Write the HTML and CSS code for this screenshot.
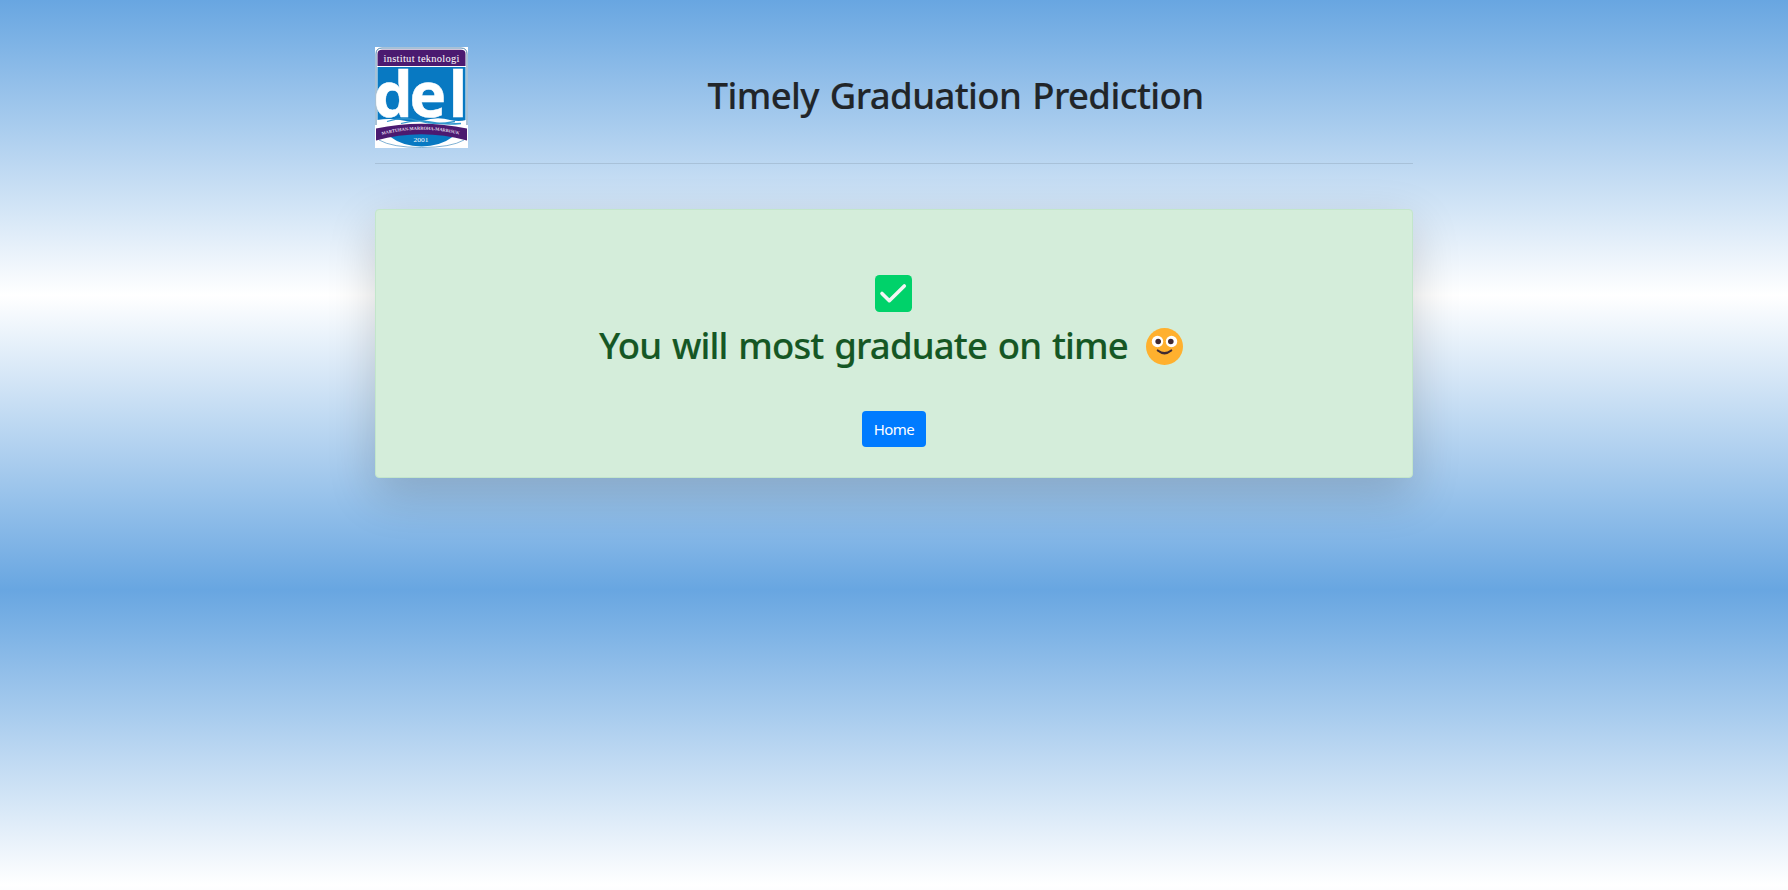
FILE: index.html
```html
<!DOCTYPE html>
<html lang="en">
<head>
<meta charset="utf-8">
<title>Timely Graduation Prediction</title>
<link rel="stylesheet" href="styles.css">
</head>
<body>
<main class="container">
  <header class="header">
    <svg class="logo" viewBox="0 0 93 101" role="img" aria-label="Institut Teknologi Del">
      <rect width="93" height="101" fill="#fff"/>
      <path d="M1 78V7Q1 1 7 1H86Q92 1 92 7V78" fill="#fff" stroke="#3d76a5" stroke-width=".9"/>
      <path d="M2.500 19V7Q2.500 2.800 7 2.800H86Q90.500 2.800 90.500 7V19Z" fill="#4b1a70"/>
      <path d="M2.500 20H90.500V76H2.500Z" fill="#0879c2"/>
      <text class="logo-top" x="46.500" y="15" text-anchor="middle" textLength="76">institut teknologi</text>
      <text class="logo-del" x="-1.500 34.500 73.500" y="70">del</text>
      <path d="M2 73Q14 71 25 73Q38 76 47 74Q62 69 75 73Q84 75 91 73V84H2Z" fill="#fff"/>
      <path d="M12 74.500Q28 69 44 74T80 74.500M26 76.500Q41 72 55 75T86 76.500" fill="none" stroke="#3296cd" stroke-width="1.300"/>
      <path d="M14 89Q46 81 79 89Q65 99.500 46.500 99.500T14 89Z" fill="#0879c2"/>
      <path d="M4 93Q17 100.500 46.500 100.500T89 93" fill="none" stroke="#4b91c1" stroke-width=".7"/>
      <path d="M1 81.500Q46 72 92 81.500V93.500Q46 81 1 93.500Z" fill="#4b1a70"/>
      <path id="motto" d="M7 88Q46 77.500 86 88" fill="none"/>
      <text class="logo-motto"><textPath href="#motto" textLength="78" lengthAdjust="spacingAndGlyphs">MARTUHAN-MARROHA-MARBISUK</textPath></text>
      <text class="logo-year" x="46" y="94.500" text-anchor="middle" textLength="15" lengthAdjust="spacingAndGlyphs">2001</text>
    </svg>
    <h1 class="title">Timely Graduation Prediction</h1>
  </header>
  <section class="result">
    <svg class="check" viewBox="0 0 37 37"><rect width="37" height="37" rx="4.500" fill="#00d26a"/><path d="M7 18.500L14.300 25.700L29.300 11" fill="none" stroke="#f4f4f4" stroke-width="3.600" stroke-linecap="round" stroke-linejoin="round"/></svg>
    <h2 class="message"><span class="message-text">You will most graduate on time</span>
      <svg class="smile" viewBox="0 0 37 37"><circle cx="18.500" cy="18.500" r="18.500" fill="#ffb02e"/><circle cx="11.500" cy="13.500" r="5.700" fill="#fff"/><circle cx="25.500" cy="13.500" r="5.700" fill="#fff"/><circle cx="12.200" cy="13.500" r="2.800" fill="#402a32"/><circle cx="24.800" cy="13.500" r="2.800" fill="#402a32"/><path d="M11.800 22.500Q18.500 28 25.200 22.500" fill="none" stroke="#402a32" stroke-width="2.200" stroke-linecap="round"/></svg>
    </h2>
    <a class="button" href="#">Home</a>
  </section>
</main>
</body>
</html>
```
FILE: styles.css
```css
* { box-sizing: border-box; }
html {
  background: linear-gradient(#68a6e1, #fff 50%, #68a6e1) 0 0 / 100% 590px;
}
body {
  min-height: 100vh;
  margin: 0;
  font-family: "Noto Sans", "Open Sans", sans-serif;
}
.container { width: 1038px; min-height: 100vh; margin: 0 auto; padding-top: 47px; }
.header {
  display: flex;
  height: 117px;
  border-bottom: 1px solid rgba(0, 0, 0, .1);
}
.logo { display: block; width: 93px; height: 101px; }
.logo-top { font: 10.500px "Liberation Serif", serif; fill: #fff; }
.logo-del { font: bold 62px "Open Sans", sans-serif; fill: #fff; stroke: #fff; stroke-width: .5px; }
.logo-motto { font: bold 4.500px "Liberation Serif", serif; fill: #e4dcec; }
.logo-year { font: 6.500px "Liberation Serif", serif; fill: #fff; }
.title {
  margin: 22px 0 0 239.500px;
  color: #212529;
  font-size: 36.500px;
  font-weight: 500;
  letter-spacing: -.6px;
  word-spacing: 2px;
  line-height: 53px;
  white-space: nowrap;
  -webkit-text-stroke: .15px;
}
.result {
  display: flex;
  flex-direction: column;
  align-items: center;
  height: 269px;
  margin-top: 45px;
  padding-top: 65px;
  border: 1px solid #c3e6cb;
  border-radius: 4px;
  background: #d4edda;
  box-shadow: 0 16px 48px rgba(0, 0, 0, .175);
}
.check { width: 37px; height: 37px; margin-right: 1px; }
.message {
  display: flex;
  align-items: center;
  gap: 18px;
  height: 53px;
  margin: 7px 6px 0 0;
  color: #155724;
  font-size: 36.500px;
  font-weight: 500;
  letter-spacing: -.83px;
  word-spacing: 2px;
  white-space: nowrap;
  -webkit-text-stroke: .15px;
}
.message-text { margin-top: -2px; }
.smile { width: 37px; height: 37px; margin-top: 1px; }
.button {
  width: 64px;
  height: 36px;
  margin-top: 39px;
  border-radius: 4px;
  background: #007bff;
  color: #fff;
  font-size: 15px;
  letter-spacing: -.6px;
  line-height: 36px;
  text-align: center;
  text-decoration: none;
}
```
